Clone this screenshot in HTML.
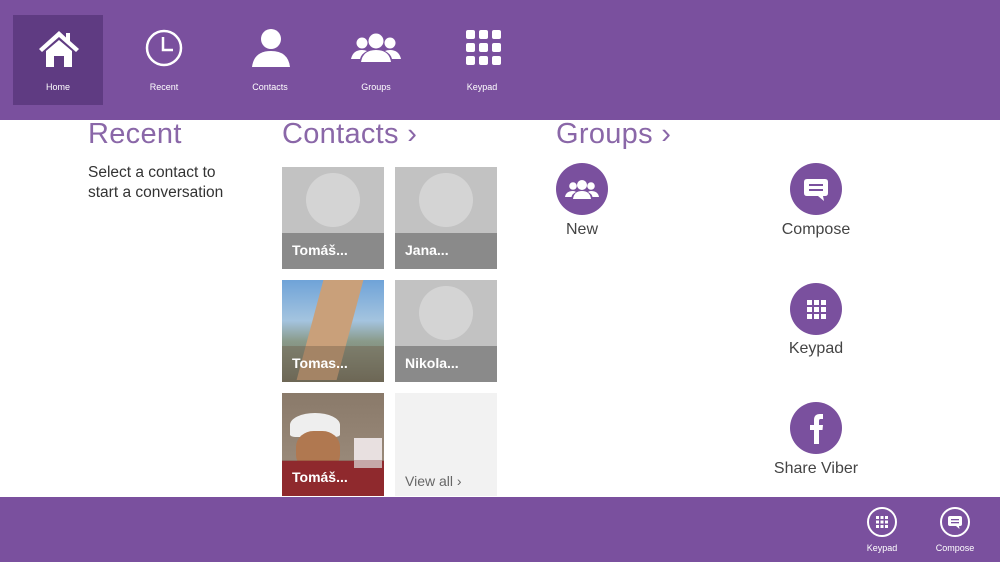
<!DOCTYPE html>
<html><head><meta charset="utf-8"><style>
*{margin:0;padding:0;box-sizing:border-box}
body{width:1000px;height:562px;overflow:hidden;background:#fff;font-family:"Liberation Sans",sans-serif;position:relative}
.top{position:absolute;left:0;top:0;width:1000px;height:120px;background:#7a509e}
.nav{position:absolute;top:15px;width:90px;height:90px;color:#fff;font-size:9px;text-align:center}
.nav svg{position:absolute;left:25px;top:14px}
.nav span{position:absolute;left:0;right:0;top:67px}
.sel{background:#5f3b82}
.h{position:absolute;top:118px;font-size:29px;color:#8a67a8;font-weight:normal;letter-spacing:0.3px}
.txt{position:absolute;left:88px;top:163px;font-size:15.5px;color:#333;line-height:19.5px}
.tile{position:absolute;width:102px;height:102px;background:#c2c2c2;overflow:hidden}
.tile .c{position:absolute;left:24px;top:6px;width:54px;height:54px;border-radius:50%;background:#d4d4d4}
.tile .b{position:absolute;left:0;bottom:0;width:102px;height:36px;background:rgba(100,100,100,.6);color:#fff;font-size:14px;font-weight:bold;padding:9px 0 0 10px}
.circ{position:absolute;width:52px;height:52px;border-radius:50%;background:#7a509e}
.circ svg{position:absolute;left:0;top:0}
.lbl{position:absolute;font-size:16px;color:#444;text-align:center;width:140px}
.bot{position:absolute;left:0;top:497px;width:1000px;height:65px;background:#7a509e}
.bb{position:absolute;top:10px;width:30px;height:30px;border:2px solid #fff;border-radius:50%}
.bl{position:absolute;top:46px;color:#fff;font-size:9px;width:60px;text-align:center}
</style></head><body>
<div class="top">
 <div class="nav sel" style="left:13px"><svg width="42" height="40" viewBox="0 0 42 40"><path d="M21 2 L1 20 L4 23 L21 8 L38 23 L41 20 L32 12 V4 H28 V8.5Z" fill="#fff"/><path d="M8 22 L21 11 L34 22 V38 H26 V27 H16 V38 H8Z" fill="#fff"/></svg><span>Home</span></div>
 <div class="nav" style="left:119px"><svg width="42" height="40" viewBox="0 0 42 40"><circle cx="20" cy="19" r="17" fill="none" stroke="#fff" stroke-width="2.5"/><path d="M19 8 V21 H29" fill="none" stroke="#fff" stroke-width="2.5"/></svg><span>Recent</span></div>
 <div class="nav" style="left:225px"><svg width="42" height="40" viewBox="0 0 42 40"><circle cx="21" cy="10" r="10" fill="#fff"/><path d="M2 38 Q4 22 21 22 Q38 22 40 38Z" fill="#fff"/></svg><span>Contacts</span></div>
 <div class="nav" style="left:331px"><svg width="52" height="40" viewBox="0 0 52 40" style="left:19px"><circle cx="26" cy="12" r="7.5" fill="#fff"/><circle cx="12" cy="14" r="5.5" fill="#fff"/><circle cx="40" cy="14" r="5.5" fill="#fff"/><path d="M11 33 Q13 21 26 21 Q39 21 41 33Z" fill="#fff"/><path d="M1 30 Q3 21 12 21 Q15 21 17 22 Q11 25 10 30Z M51 30 Q49 21 40 21 Q37 21 35 22 Q41 25 42 30Z" fill="#fff"/></svg><span>Groups</span></div>
 <div class="nav" style="left:437px"><svg width="42" height="40" viewBox="0 0 42 40" style="left:28px"><g fill="#fff"><rect x="1" y="1" width="9" height="9" rx="2"/><rect x="14" y="1" width="9" height="9" rx="2"/><rect x="27" y="1" width="9" height="9" rx="2"/><rect x="1" y="14" width="9" height="9" rx="2"/><rect x="14" y="14" width="9" height="9" rx="2"/><rect x="27" y="14" width="9" height="9" rx="2"/><rect x="1" y="27" width="9" height="9" rx="2"/><rect x="14" y="27" width="9" height="9" rx="2"/><rect x="27" y="27" width="9" height="9" rx="2"/></g></svg><span>Keypad</span></div>
</div>
<div class="h" style="left:88px">Recent</div>
<div class="h" style="left:282px">Contacts ›</div>
<div class="h" style="left:556px">Groups ›</div>
<div class="txt">Select a contact to<br>start a conversation</div>
<div class="tile" style="left:282px;top:167px"><div class="c"></div><div class="b">Tomáš...</div></div>
<div class="tile" style="left:395px;top:167px"><div class="c"></div><div class="b">Jana...</div></div>
<div class="tile" style="left:282px;top:280px;background:linear-gradient(#6fa3d8 0%,#a4c4df 40%,#8a9a8a 60%,#6d7060 100%)"><div style="position:absolute;left:28px;top:0;width:40px;height:100px;background:#c9a07a;transform:skewX(-15deg)"></div><div class="b" style="background:rgba(110,90,70,.4)">Tomas...</div></div>
<div class="tile" style="left:395px;top:280px"><div class="c"></div><div class="b">Nikola...</div></div>
<div class="tile" style="left:282px;top:393px;height:103px;background:linear-gradient(#8a7a6a,#a09080)"><div style="position:absolute;left:8px;top:20px;width:50px;height:24px;border-radius:50% 50% 10% 10%;background:#eee"></div><div style="position:absolute;left:14px;top:38px;width:44px;height:40px;border-radius:40%;background:#b07850"></div><div style="position:absolute;left:0;top:68px;width:102px;height:35px;background:#9a2a30"></div><div style="position:absolute;left:72px;top:45px;width:28px;height:30px;background:#e8e0e0"></div><div class="b" style="background:rgba(120,40,40,.3)">Tomáš...</div></div>
<div class="tile" style="left:395px;top:393px;height:103px;background:#f2f2f2"><div style="position:absolute;left:10px;top:80px;font-size:14px;color:#666">View all ›</div></div>

<div class="circ" style="left:556px;top:163px"><svg width="52" height="52" viewBox="0 0 52 52"><circle cx="26" cy="22" r="5" fill="#fff"/><circle cx="17" cy="23" r="3.8" fill="#fff"/><circle cx="35" cy="23" r="3.8" fill="#fff"/><path d="M17 36 Q18 28 26 28 Q34 28 35 36Z M9 34 Q10 28 17 28 Q19 28 20 29 Q16 31 15.5 34Z M43 34 Q42 28 35 28 Q33 28 32 29 Q36 31 36.5 34Z" fill="#fff"/></svg></div>
<div class="lbl" style="left:512px;top:221px">New</div>
<div class="circ" style="left:790px;top:163px"><svg width="52" height="52" viewBox="0 0 52 52"><path d="M17 16 H35 Q38 16 38 19 V30 Q38 33 35 33 H33 L34 38 L28 33 H17 Q14 33 14 30 V19 Q14 16 17 16Z" fill="#fff"/><rect x="19" y="21" width="14" height="2" fill="#7a509e"/><rect x="19" y="26" width="14" height="2" fill="#7a509e"/></svg></div>
<div class="lbl" style="left:746px;top:221px">Compose</div>
<div class="circ" style="left:790px;top:283px"><svg width="52" height="52" viewBox="0 0 52 52"><g fill="#fff"><rect x="17" y="17" width="5" height="5"/><rect x="24" y="17" width="5" height="5"/><rect x="31" y="17" width="5" height="5"/><rect x="17" y="24" width="5" height="5"/><rect x="24" y="24" width="5" height="5"/><rect x="31" y="24" width="5" height="5"/><rect x="17" y="31" width="5" height="5"/><rect x="24" y="31" width="5" height="5"/><rect x="31" y="31" width="5" height="5"/></g></svg></div>
<div class="lbl" style="left:746px;top:340px">Keypad</div>
<div class="circ" style="left:790px;top:402px"><svg width="52" height="52" viewBox="0 0 52 52"><path d="M24 42 V28 H20 V23 H24 V18 Q24 12 30 12 H33 V17 H30.5 Q29 17 29 19 V23 H33 L32.5 28 H29 V42Z" fill="#fff"/></svg></div>
<div class="lbl" style="left:746px;top:460px">Share Viber</div>

<div class="bot">
 <div class="bb" style="left:867px"><svg width="26" height="26" viewBox="0 0 26 26"><g fill="#fff"><rect x="7" y="7" width="3" height="3"/><rect x="11.5" y="7" width="3" height="3"/><rect x="16" y="7" width="3" height="3"/><rect x="7" y="11.5" width="3" height="3"/><rect x="11.5" y="11.5" width="3" height="3"/><rect x="16" y="11.5" width="3" height="3"/><rect x="7" y="16" width="3" height="3"/><rect x="11.5" y="16" width="3" height="3"/><rect x="16" y="16" width="3" height="3"/></g></svg></div>
 <div class="bl" style="left:852px">Keypad</div>
 <div class="bb" style="left:940px"><svg width="26" height="26" viewBox="0 0 26 26"><path d="M8 7 H18 Q20 7 20 9 V15 Q20 17 18 17 H17 L17.5 20 L14 17 H8 Q6 17 6 15 V9 Q6 7 8 7Z" fill="#fff"/><rect x="9" y="10" width="8" height="1.3" fill="#7a509e"/><rect x="9" y="13" width="8" height="1.3" fill="#7a509e"/></svg></div>
 <div class="bl" style="left:925px">Compose</div>
</div>
</body></html>
